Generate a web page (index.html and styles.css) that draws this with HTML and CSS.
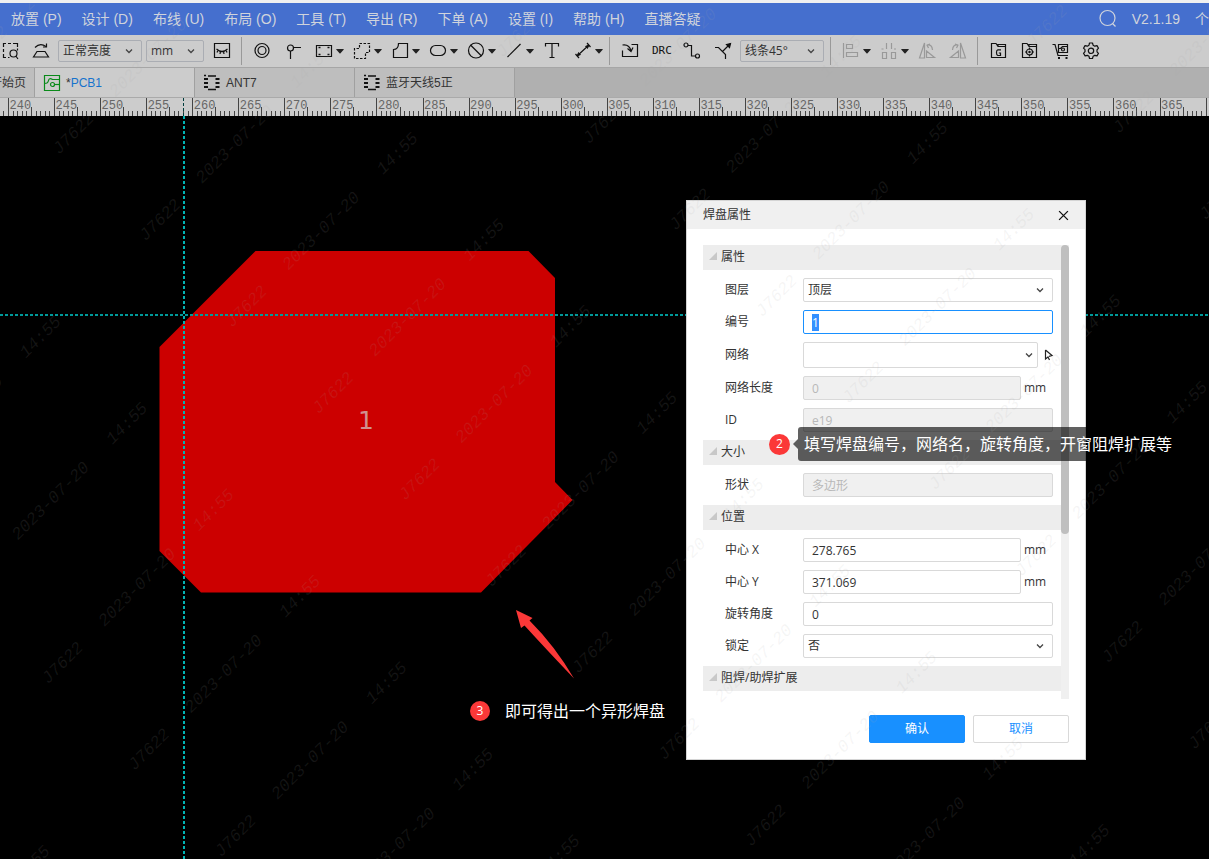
FILE: index.html
```html
<!DOCTYPE html>
<html lang="zh-CN">
<head>
<meta charset="utf-8">
<title>PCB1</title>
<link rel="stylesheet" href="styles.css">
</head>
<body>
<svg class="defs" aria-hidden="true">
  <symbol id="caret" viewBox="0 0 8 5"><path d="M0.6 0h6.8q.8.2.2.8L4.5 4.2q-.5.5-1 0L.4.8Q-.2.2.6 0z" fill="#222"/></symbol>
  <symbol id="chevron" viewBox="0 0 8 8"><path d="M1 2.5l3 3 3-3" fill="none" stroke="#444" stroke-width="1.3"/></symbol>
  <symbol id="chip" viewBox="0 0 18 18"><path d="M5 2h8M5 15.500h8" stroke="#111" stroke-width="1.500"/><path d="M1 5h4M1 9h4M1 13h4M12.500 5h4M12.500 9h4M12.500 13h4" stroke="#111" stroke-width="2"/><path d="M1 1.500h2M2 .5v2" stroke="#111"/></symbol>
</svg>

<nav class="menubar">
  <button>放置 (P)</button><button>设计 (D)</button><button>布线 (U)</button><button>布局 (O)</button><button>工具 (T)</button><button>导出 (R)</button><button>下单 (A)</button><button>设置 (I)</button><button>帮助 (H)</button><button>直播答疑</button>
  <div class="account">
    <button aria-label="搜索"><svg class="icon" viewBox="0 0 20 20"><circle cx="9.500" cy="9" r="7.500"/><path d="M14.500 14.500l3 3"/></svg></button>
    <span class="version">V2.1.19</span>
    <button class="user">个</button>
  </div>
</nav>

<div class="toolbar">
  <button class="tool first" aria-label="框选"><svg class="icon" viewBox="0 0 20 20"><path d="M3.500 6V2.500H6M8 2.500h3M13 2.500h4.500V6M3.500 8v3M3.500 13v3.500H6M8 16.500h1.500M17.500 7.500v2"/><circle cx="13.500" cy="12.500" r="3.500"/><path d="M15.800 15l2.200 3"/></svg></button>
  <button class="tool" aria-label="翻转"><svg class="icon" viewBox="0 0 20 20"><path d="M6 10.500h8l3.500 5.500H2.500zM4 6.500q5-5 11-1"/><path d="M12 6h3.500V2.500" /></svg></button>
  <span class="picker brightness"><select aria-label="亮度"><option>正常亮度</option></select><svg><use href="#chevron"/></svg></span>
  <span class="picker unit"><select aria-label="单位"><option>mm</option></select><svg><use href="#chevron"/></svg></span>
  <button class="tool eye" aria-label="隐藏"><svg class="icon" viewBox="0 0 20 20"><path d="M2.500 2.500h15v14h-15z"/><path d="M4.500 8q5.500 5 11 0M6 9l-1 2.500M8.500 10.300L8 13M11.500 10.300L12 13M14 9l1 2.500"/></svg></button>
  <i class="divider"></i>
  <button class="tool" aria-label="焊盘"><svg class="icon" viewBox="0 0 20 20"><circle cx="10" cy="9.500" r="7"/><circle cx="10" cy="9.500" r="4"/></svg></button>
  <button class="tool" aria-label="过孔"><svg class="icon" viewBox="0 0 20 20"><circle cx="7.500" cy="7" r="3"/><path d="M10.500 6.500H18M7.500 10v8"/></svg></button>
  <button class="tool" aria-label="铺铜"><svg class="icon" viewBox="0 0 20 20"><path d="M2.500 4.500h15v11h-15z"/><path d="M4.500 6.500h2M13.500 6.500h2M4.500 13.500h2M13.500 13.500h2" stroke-width="1.500"/></svg><svg class="caret"><use href="#caret"/></svg></button>
  <button class="tool" aria-label="禁止区域"><svg class="icon" viewBox="0 0 20 20"><path d="M7.500 2.500h10v9h-4v6h-11v-10h5z" stroke-dasharray="2.500 1.500"/></svg><svg class="caret"><use href="#caret"/></svg></button>
  <button class="tool" aria-label="填充区域"><svg class="icon" viewBox="0 0 20 20"><path d="M8.500 2.500h9v14h-14v-8q5 0 5-6z"/></svg><svg class="caret"><use href="#caret"/></svg></button>
  <button class="tool" aria-label="挖槽"><svg class="icon" viewBox="0 0 20 20"><rect x="2.500" y="4.500" width="15" height="10" rx="5"/></svg><svg class="caret"><use href="#caret"/></svg></button>
  <button class="tool" aria-label="禁止"><svg class="icon" viewBox="0 0 20 20"><circle cx="10" cy="9.500" r="7.500"/><path d="M4.500 4l11 11"/></svg><svg class="caret"><use href="#caret"/></svg></button>
  <button class="tool" aria-label="线条"><svg class="icon" viewBox="0 0 20 20"><path d="M3.500 16L16.500 3"/></svg><svg class="caret"><use href="#caret"/></svg></button>
  <button class="tool" aria-label="文本"><svg class="icon" viewBox="0 0 20 20"><path d="M3.500 5.500v-3h13v3M10 2.500v14M7.500 16.500h5"/></svg></button>
  <button class="tool" aria-label="尺寸"><svg class="icon" viewBox="0 0 20 20"><path d="M4 15L16 4M2.500 13l3.500 4M14 2l3.500 4"/><path d="M4 15l1.500-3.500 2 2.200zM16 4l-1.500 3.500-2-2.200z" fill="#111" stroke-width=".8"/></svg><svg class="caret"><use href="#caret"/></svg></button>
  <i class="divider"></i>
  <button class="tool" aria-label="导入"><svg class="icon" viewBox="0 0 20 20"><path d="M11.500 3.500h6v12h-15v-6M2.500 4q7-1 8.500 6M7.500 7.500l3.500 3 2-4"/></svg></button>
  <button class="tool drc">DRC</button>
  <button class="tool" aria-label="布线"><svg class="icon" viewBox="0 0 20 20"><circle cx="4" cy="4" r="2"/><circle cx="15.500" cy="15" r="2"/><path d="M6 4.500h3.500v10.500h4"/></svg></button>
  <button class="tool" aria-label="差分布线"><svg class="icon" viewBox="0 0 20 20"><path d="M2 6.500h3.500l7 7V18M9.500 10.500L17 3"/><path d="M17.500 2.500l-1 4-3-3z" fill="#111"/></svg></button>
  <span class="picker corner"><select aria-label="拐角"><option>线条45°</option></select><svg><use href="#chevron"/></svg></span>
  <i class="divider wide"></i>
  <button class="tool off" aria-label="对齐"><svg class="icon" viewBox="0 0 20 20"><path d="M2.500 2v15M5.500 3.500h6v4h-6zM5.500 11.500h11v4h-11z"/></svg><svg class="caret"><use href="#caret"/></svg></button>
  <button class="tool off" aria-label="分布"><svg class="icon" viewBox="0 0 20 20"><path d="M7.500 2v6M12.500 2v6M3.500 11.500h4v6h-4zM12.500 11.500h4v6h-4zM2.500 8h2M15 8h2"/></svg><svg class="caret"><use href="#caret"/></svg></button>
  <button class="tool off" aria-label="左旋"><svg class="icon" viewBox="0 0 20 20"><path d="M7.500 2v15h-5zM9.500 16.500V10l8 6.500zM10 4q5-1 5.500 5M13 3l-3 1 1.500 3"/></svg></button>
  <button class="tool off" aria-label="右旋"><svg class="icon" viewBox="0 0 20 20"><path d="M12.500 2v15h5zM10.500 16.500V10l-8 6.500zM10 4q-5-1-5.500 5M7 3l3 1-1.500 3"/></svg></button>
  <i class="divider"></i>
  <button class="tool" aria-label="Gerber"><svg class="icon" viewBox="0 0 20 20"><path d="M3.500 16.500v-14H8l2 3h7.500v11zM10 5.500V3.500h7.500v2"/><path d="M13 8.800H9.800Q8.500 9 8.500 11.500t1.300 3H12.500V12H10.800"/></svg></button>
  <button class="tool" aria-label="坐标文件"><svg class="icon" viewBox="0 0 20 20"><path d="M3.500 16.500v-14H8l2 3h7.500v11zM10 5.500V3.500h7.500v2"/><circle cx="10.500" cy="11" r="3"/><path d="M10.500 6.500v2M10.500 13.500v2M6 11h2M13 11h2"/><circle cx="10.500" cy="11" r=".6" fill="#111"/></svg></button>
  <button class="tool" aria-label="下单"><svg class="icon" viewBox="0 0 20 20"><path d="M2.500 3.500h2.500l3 11h10M8.500 3.500h9v8h-9zM8.500 7.500h2l2-2h5"/><circle cx="13" cy="8.500" r="1.500"/><path d="M8 17h2M15.500 17h2" stroke-width="2"/></svg></button>
  <button class="tool" aria-label="设置"><svg class="icon" viewBox="0 0 20 20"><path d="M8 4.200L8.500 2h3l.6 2.200 1.700 1 2.200-.6 1.500 2.600L16 8.800v2l1.500 1.500-1.500 2.600-2.200-.6-1.700 1-.6 2.200h-3L8 15.300l-1.700-1-2.200.6-1.600-2.600L4 10.700v-2L2.500 7.200 4 4.600l2.300.6z" stroke-linejoin="round"/><circle cx="10" cy="9.800" r="2.700"/></svg></button>
</div>

<div class="tabs" role="tablist">
  <button class="tab start" role="tab">开始页</button>
  <button class="tab active" role="tab"><svg class="tab-icon" viewBox="0 0 18 18" fill="none" stroke="#0a8a1a" stroke-width="1.200"><path d="M1.500 1.500h15v15h-15zM1.500 9.500q3.500 0 4-3t4-1h7"/><circle cx="9.500" cy="10.500" r="2"/><path d="M11.500 10.500h5"/></svg><span><span class="dirty">*</span>PCB1</span></button>
  <button class="tab" role="tab"><svg class="tab-icon"><use href="#chip"/></svg>ANT7</button>
  <button class="tab" role="tab"><svg class="tab-icon"><use href="#chip"/></svg>蓝牙天线5正</button>
</div>

<svg class="ruler" id="ruler"></svg>

<main class="workspace">
  <svg class="board">
    <path d="M255.500 135H528.500L555 162V366L572.500 384 481 476.500H201L159.500 435V231z" fill="#c00"/>
    <text class="pad-number" x="358" y="313">1</text>
    <line class="cross-h" x1="0" y1="199" x2="100%" y2="199"/>
    <line class="cross-v" x1="184" y1="0" x2="184" y2="100%"/>
    <path d="M516 494L532.500 502 529.500 504.500 Q555 530 574 562.500 Q545 532 524.500 509.500L521 512z" fill="#fb3838"/>
  </svg>

  <p class="note result"><b class="badge">3</b><span>即可得出一个异形焊盘</span></p>

  <section class="dialog" role="dialog" aria-labelledby="dialog-title">
    <header class="dialog-head">
      <h1 id="dialog-title">焊盘属性</h1>
      <button class="close" aria-label="关闭"><svg viewBox="0 0 10 10"><path d="M1 1l8 8M9 1L1 9" stroke="#111" stroke-width="1.200"/></svg></button>
    </header>
    <div class="scroll">
      <form class="fields">
        <h2>属性</h2>
        <div class="row"><label for="layer">图层</label><span class="picker"><select id="layer"><option>顶层</option></select><svg><use href="#chevron"/></svg></span></div>
        <div class="row"><label for="number">编号</label><input id="number" value="1" autocomplete="off"></div>
        <div class="row"><label for="net">网络</label><span class="picker net"><select id="net"><option></option></select><svg><use href="#chevron"/></svg></span><button type="button" class="pick" aria-label="拾取"><svg viewBox="0 0 10 12"><path d="M1.500 1v9l2.500-2 1.500 3M1.500 1l6.500 5.500-3 .8" fill="none" stroke="#222" stroke-width="1.200"/></svg></button></div>
        <div class="row"><label for="length">网络长度</label><input id="length" value="0" disabled><span class="suffix">mm</span></div>
        <div class="row"><label for="ident">ID</label><input id="ident" value="e19" disabled></div>
        <h2>大小</h2>
        <div class="row"><label for="shape">形状</label><input id="shape" value="多边形" disabled></div>
        <h2>位置</h2>
        <div class="row"><label for="cx">中心 X</label><input id="cx" value="278.765"><span class="suffix">mm</span></div>
        <div class="row"><label for="cy">中心 Y</label><input id="cy" value="371.069"><span class="suffix">mm</span></div>
        <div class="row"><label for="angle">旋转角度</label><input id="angle" value="0"></div>
        <div class="row"><label for="lock">锁定</label><span class="picker"><select id="lock"><option>否</option></select><svg><use href="#chevron"/></svg></span></div>
        <h2>阻焊/助焊扩展</h2>
      </form>
      <div class="track"><div class="thumb"></div></div>
    </div>
    <footer class="actions"><button class="primary">确认</button><button>取消</button></footer>
  </section>

  <p class="note hint"><b class="badge">2</b><span class="bubble">填写焊盘编号，网络名，旋转角度，开窗阻焊扩展等</span></p>
</main>

<svg class="watermark" id="watermark" aria-hidden="true"></svg>
<script src="app.js"></script>
</body>
</html>
```
FILE: styles.css
```css
* { box-sizing: border-box; }
body {
  margin: 0;
  min-height: 100vh;
  display: flex;
  flex-direction: column;
  position: relative;
  overflow: hidden;
  border-top: 3px solid #f0f0f0;
  background: #000;
  color: #333;
  font: 12px/16px "Open Sans", "Noto Sans CJK SC", sans-serif;
}
button, input, select { font: inherit; color: inherit; }
button { border: 0; padding: 0; background: none; white-space: nowrap; }
h1, h2, p { margin: 0; font-size: 12px; font-weight: 400; }
.defs { position: absolute; width: 0; height: 0; }

.menubar {
  display: flex;
  gap: 20px;
  height: 32px;
  padding-left: 11px;
  background: #456fce;
  color: #d0d4dc;
  font: 14px/20px "Liberation Sans", "Noto Sans CJK SC", sans-serif;
  white-space: nowrap;
}
.account { display: flex; align-items: center; margin-left: auto; }
.account .icon { stroke: #d0d4dc; }
.version { margin: 0 15px 0 14px; }
.user { width: 14px; text-align: left; }

.icon { display: block; width: 20px; height: 20px; fill: none; stroke: #111; stroke-width: 1.2; }
.toolbar {
  display: flex;
  align-items: center;
  height: 33px;
  background: #ccc;
  border-bottom: 1px solid #a6a6a6;
  overflow: hidden;
}
.toolbar > * { flex: none; }
.tool { display: flex; align-items: center; gap: 2px; height: 28px; padding: 0 6px 0 5px; }
.tool:has(.caret) { padding-right: 3px; }
.tool.first { padding-left: 0; }
.tool.eye { margin-left: 3px; }
.tool.off .icon { stroke: #999; }
.tool.drc { width: 31px; padding: 0 6px; font: 11px/20px "DejaVu Sans Mono", monospace; color: #111; }
.caret { width: 8px; height: 5px; }
.divider { width: 1px; height: 28px; margin: 0 5px 0 3px; background: #999; }
.divider.wide { margin-left: 6px; }

.picker { position: relative; display: flex; }
.picker select {
  appearance: none;
  width: 100%;
  height: 24px;
  padding: 0 20px 0 4px;
  border: 1px solid #d9d9d9;
  border-radius: 2px;
  background: #fff;
  outline: 0;
}
.picker svg { position: absolute; right: 9px; top: 50%; width: 8px; height: 8px; margin-top: -4px; }
.toolbar .picker { margin-left: 1px; }
.toolbar .picker.unit { margin-left: 4px; }
.toolbar .picker select { height: 22px; background: #ccc; border-color: #aaadb3; }
.brightness, .corner { width: 84px; }
.unit { width: 58px; }

.tabs { display: flex; height: 29px; background: #b0b0b0; overflow: hidden; }
.tab {
  display: flex;
  flex: none;
  align-items: center;
  gap: 5px;
  width: 160px;
  padding: 0 8px;
  border-right: 1px solid #a0a0a0;
  background: #bebebe;
  font-family: "Liberation Sans", "Noto Sans CJK SC", sans-serif;
}
.tab.start { width: 35px; justify-content: flex-end; overflow: hidden; }
.tab.active { background: #ccc; color: #1673cc; }
.dirty { color: #333; }
.tab-icon { width: 18px; height: 18px; }

.ruler { display: block; width: 100%; height: 19px; flex: none; background: #ccc; border-top: 1px solid #aaa; }
.ruler text { font: 12px "Liberation Mono", monospace; fill: #666; }
.ruler path { stroke: #444; shape-rendering: crispEdges; }

.workspace { position: relative; flex: 1; }
.board { position: absolute; width: 100%; height: 100%; }
.pad-number { font: 25px "DejaVu Sans", sans-serif; fill: #d09090; }
.cross-h { stroke: #099; stroke-width: 2; stroke-dasharray: 3 2; }
.cross-v { stroke: #00b4b4; stroke-width: 2; stroke-dasharray: 3 2; }

.note { position: absolute; display: flex; align-items: center; color: #fff; font-size: 16px; line-height: 24px; white-space: nowrap; }
.result { left: 470px; top: 583px; gap: 15px; }
.hint { left: 769px; top: 311px; gap: 8px; }
.badge { width: 20px; height: 20px; border-radius: 50%; background: #fb3838; font-size: 12px; font-weight: 400; line-height: 20px; text-align: center; }
.hint .badge { width: 21px; height: 21px; }
.bubble { position: relative; padding: 5px 6px; border-radius: 3px; background: rgba(0, 0, 0, .62); }
.bubble::before {
  content: "";
  position: absolute;
  right: 100%;
  top: 12px;
  border: 5px solid transparent;
  border-left-width: 0;
  border-right-color: rgba(0, 0, 0, .62);
}

.dialog {
  position: absolute;
  left: 686px;
  top: 84px;
  width: 400px;
  padding-bottom: 16px;
  border: 1px solid #d4d4d4;
  background: #fff;
}
.dialog-head { display: flex; align-items: center; justify-content: space-between; height: 28px; padding: 0 16px; background: #f0f0f0; }
.close svg { display: block; width: 11px; height: 11px; }
.scroll { display: flex; margin: 16px 16px 0; }
.fields { display: flex; flex: 1; flex-direction: column; gap: 8px; padding-bottom: 8px; }
.fields h2 { display: flex; align-items: center; gap: 4px; height: 25px; padding: 0 6px 2px; background: #ededed; }
.fields h2::before { content: ""; margin-bottom: 2px; border: 4px solid #c8c8c8; border-top-color: transparent; border-left-color: transparent; }
.row { display: flex; align-items: center; padding: 0 8px 0 22px; }
.row label { width: 78px; flex: none; }
.row input {
  flex: 1;
  min-width: 0;
  height: 24px;
  padding: 0 8px;
  border: 1px solid #d9d9d9;
  border-radius: 2px;
  background: #fff;
  outline: 0;
}
.row input:focus { border-color: #1890ff; }
.row input::selection { background: #3390ff; color: #fff; }
.row input:disabled { background: #f0f0f0; color: #b8b8b8; }
.row .picker { flex: 1; }
.row .net select { height: 26px; }
.row .net svg { right: 5px; }
.suffix { width: 32px; padding-left: 3px; }
.pick { width: 15px; padding-left: 6px; }
.pick svg { display: block; width: 10px; height: 12px; }
.track { width: 8px; background: #f0f0f0; }
.thumb { height: 289px; border-radius: 4px; background: #bfbfbf; }
.actions { display: flex; justify-content: flex-end; gap: 8px; padding: 16px 16px 0; }
.actions button { width: 96px; height: 28px; border: 1px solid #d9d9d9; border-radius: 2px; color: #1890ff; }
.actions .primary { border-color: #1890ff; background: #1890ff; color: #fff; }

.watermark { position: absolute; left: 0; top: -3px; width: 100%; height: 100vh; pointer-events: none; }
.watermark text { font: italic 17px "Liberation Mono", monospace; fill: rgba(170, 170, 170, .12); }
```
FILE: app.js
```js
const NS = "http://www.w3.org/2000/svg";

function add(parent, name, attrs, content) {
  const node = document.createElementNS(NS, name);
  for (const key in attrs) node.setAttribute(key, attrs[key]);
  if (content) node.textContent = content;
  parent.appendChild(node);
}

// Ruler: a label every 5 units, a long tick halfway, ten divisions between labels
const ruler = document.getElementById("ruler");
const unit = 46.06;
let ticks = "";
for (let i = -1; 8.5 + i * unit < window.innerWidth; i++) {
  const x = 8.5 + i * unit;
  ticks += `M${x} 0V18`;
  for (let k = 1; k < 10; k++) {
    ticks += `M${x + k * unit / 10} ${k === 5 ? 9 : 13}V18`;
  }
  if (x > 0 && x + 22 < window.innerWidth) {
    add(ruler, "text", { x: x + 1, y: 11 }, String(240 + i * 5));
  }
}
add(ruler, "path", { d: ticks });
add(ruler, "line", { x1: 183.5, x2: 183.5, y1: 0, y2: 18, stroke: "#003c3c", "stroke-dasharray": "3 2" });

// Watermark: three diagonal texts repeated on a slanted lattice
const mark = document.getElementById("watermark");
const parts = [[59, 155, "J7622"], [202, 184, "2023-07-20"], [383, 175, "14:55"]];
for (let a = -3; a <= 3; a++) {
  for (let b = -10; b <= 18; b++) {
    for (const [px, py, label] of parts) {
      const x = px + a * 530 + b * 86.5;
      const y = py - a * 10.5 + b * 86.5;
      if (x < -70 || y < 0 || x > window.innerWidth || y > window.innerHeight + 70) continue;
      add(mark, "text", { transform: `translate(${x} ${y}) rotate(-45)` }, label);
    }
  }
}

const number = document.getElementById("number");
number.focus();
number.select();
```
